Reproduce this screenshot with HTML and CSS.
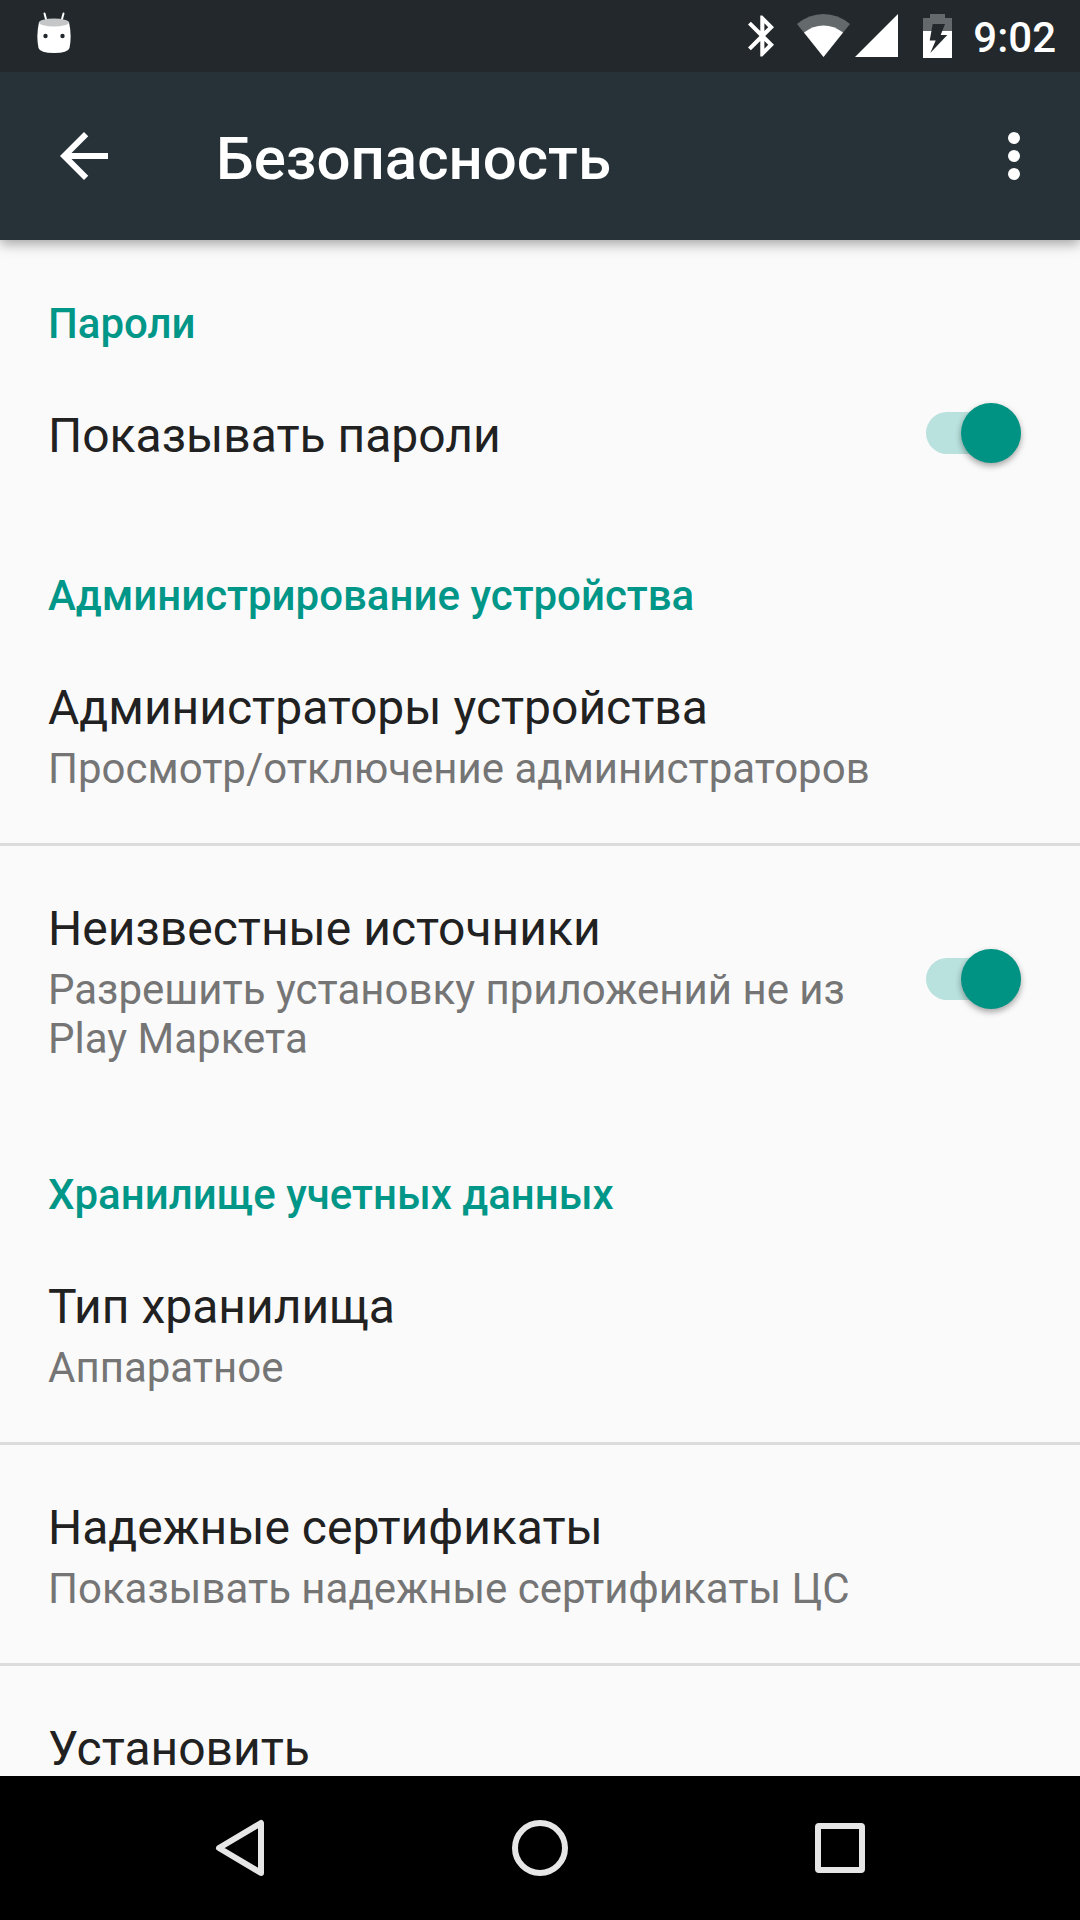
FILE: index.html
```html
<!DOCTYPE html>
<html lang="ru">
<head>
  <meta charset="UTF-8">
  <meta name="viewport" content="width=device-width, initial-scale=1">
  <title>Безопасность</title>
  <link rel="stylesheet" href="styles.css">
</head>
<body>

<div class="status-bar">
  <svg class="icon-notification" width="36" height="42" viewBox="0 0 36 42">
    <path d="M8.500 1.500L10.500 9M27.500 1.500L25.500 9" stroke="#fff" stroke-width="2" stroke-linecap="round"/>
    <path d="M3 10Q18 5 33 10Q36 24 33.500 36Q32 41 18 41Q4 41 2.500 36Q0 24 3 10z" fill="#fff"/>
    <ellipse cx="18" cy="10.500" rx="15" ry="4" fill="#c4c6c7"/>
    <circle cx="9.500" cy="24" r="2.200" fill="#22282b"/>
    <circle cx="26.500" cy="24" r="2.200" fill="#22282b"/>
  </svg>
  <div class="status-icons">
    <svg width="26" height="44" viewBox="5 2 12.700 20">
      <path fill="#fff" d="M17.710 7.710L12 2h-1v7.590L6.410 5 5 6.410 10.590 12 5 17.590 6.410 19 11 14.410V22h1l5.710-5.710-4.300-4.290 4.300-4.290zM13 5.830l1.880 1.880L13 9.590V5.830zm1.880 10.460L13 18.170v-3.760l1.880 1.880z"/>
    </svg>
    <svg class="icon-wifi" width="53" height="44" viewBox="0 0 53 44">
      <path fill="#64696b" d="M0 10Q12 0 26.500 0T53 10L26.500 43z"/>
      <path fill="#fff" d="M7 18.500Q16 11.500 26.500 11.500T46 18.500L26.500 43z"/>
    </svg>
    <svg class="icon-signal" width="43" height="44" viewBox="0 0 43 44">
      <path fill="#fff" d="M43 0v43H0z"/>
    </svg>
    <svg class="icon-battery" width="29" height="44" viewBox="0 0 29 44">
      <path fill="#64696b" d="M7 0h15v4h7v14H0V4h7z"/>
      <path fill="#fff" d="M0 17h29v27H0z"/>
      <path fill="#22282b" d="M9.700 10H22l-4.300 11h6.600l-17 18 5.400-12.500h-6z"/>
    </svg>
    <span class="clock">9:02</span>
  </div>
</div>

<header class="app-bar">
  <button class="icon-button" type="button" aria-label="Назад">
    <svg width="72" height="72" viewBox="0 0 24 24">
      <path fill="#fff" d="M20 11H7.830l5.590-5.590L12 4l-8 8 8 8 1.410-1.410L7.830 13H20v-2z"/>
    </svg>
  </button>
  <h1>Безопасность</h1>
  <button class="icon-button" type="button" aria-label="Ещё">
    <svg width="72" height="72" viewBox="0 0 24 24">
      <g fill="#fff">
        <circle cx="12" cy="6" r="2"/>
        <circle cx="12" cy="12" r="2"/>
        <circle cx="12" cy="18" r="2"/>
      </g>
    </svg>
  </button>
</header>

<main class="settings">
  <h2>Пароли</h2>
  <div class="item">
    <label class="item-text" for="showPasswords">
      <span class="item-title">Показывать пароли</span>
    </label>
    <input class="switch" type="checkbox" id="showPasswords" checked>
  </div>

  <h2>Администрирование устройства</h2>
  <div class="item">
    <div class="item-text">
      <span class="item-title">Администраторы устройства</span>
      <span class="item-summary">Просмотр/отключение администраторов</span>
    </div>
  </div>
  <div class="item">
    <label class="item-text" for="unknownSources">
      <span class="item-title">Неизвестные источники</span>
      <span class="item-summary">Разрешить установку приложений не из Play Маркета</span>
    </label>
    <input class="switch" type="checkbox" id="unknownSources" checked>
  </div>

  <h2>Хранилище учетных данных</h2>
  <div class="item">
    <div class="item-text">
      <span class="item-title">Тип хранилища</span>
      <span class="item-summary">Аппаратное</span>
    </div>
  </div>
  <div class="item">
    <div class="item-text">
      <span class="item-title">Надежные сертификаты</span>
      <span class="item-summary">Показывать надежные сертификаты ЦС</span>
    </div>
  </div>
  <div class="item">
    <div class="item-text">
      <span class="item-title">Установить</span>
    </div>
  </div>
</main>

<nav class="nav-bar">
  <button type="button" aria-label="Назад">
    <svg width="60" height="60" viewBox="0 0 60 60">
      <path d="M51 5v50L9 30z"/>
    </svg>
  </button>
  <button type="button" aria-label="Главный экран">
    <svg width="60" height="60" viewBox="0 0 60 60">
      <circle cx="30" cy="30" r="25"/>
    </svg>
  </button>
  <button type="button" aria-label="Обзор">
    <svg width="60" height="60" viewBox="0 0 60 60">
      <rect x="8" y="8" width="44" height="44" rx="1"/>
    </svg>
  </button>
</nav>

</body>
</html>
```
FILE: styles.css
```css
* {
  box-sizing: border-box;
}
body {
  display: flex;
  flex-direction: column;
  height: 100vh;
  margin: 0;
  font-family: Roboto, sans-serif;
  color: #212121;
  background-color: #fafafa;
}
h1, h2 {
  margin: 0;
  font-weight: 500;
}
button {
  padding: 0;
  border: none;
  background: none;
  cursor: pointer;
}
svg {
  display: block;
  fill: none;
}

/* status bar */
.status-bar {
  display: flex;
  flex: none;
  align-items: center;
  justify-content: space-between;
  position: relative;
  z-index: 2;
  height: 72px;
  padding: 0 24px 0 36px;
  background-color: #22282b;
}
.icon-notification {
  margin-bottom: 6px;
}
.status-icons {
  display: flex;
  align-items: center;
}
.icon-wifi {
  margin-left: 23px;
}
.icon-signal {
  margin-left: 5px;
}
.icon-battery {
  margin-left: 25px;
}
.clock {
  padding-top: 4px;
  margin-left: 21px;
  font-size: 42px;
  font-weight: 500;
  line-height: 48px;
  color: #fff;
}

/* app bar */
.app-bar {
  display: flex;
  flex: none;
  align-items: center;
  position: relative;
  z-index: 1;
  height: 168px;
  padding: 0 30px 0 48px;
  background-color: #263238;
  box-shadow: 0 4px 12px rgba(0,0,0,0.35);
}
.app-bar h1 {
  flex: 1;
  padding-top: 6px;
  margin-left: 96px;
  font-size: 60px;
  line-height: 70px;
  color: #fff;
}

/* settings list */
.settings {
  flex: 1;
  min-height: 0;
  padding-top: 2px;
  overflow: hidden;
}
.settings h2 {
  padding: 57px 48px 5px;
  font-size: 42px;
  line-height: 49px;
  color: #009688;
}
.item {
  display: flex;
  align-items: center;
  padding: 55px 59px 50px 48px;
}
.item + .item {
  border-top: 3px solid #dcdcdc;
}
.item-text {
  display: flex;
  flex: 1;
  flex-direction: column;
  gap: 8px;
}
.item-title {
  font-size: 48px;
  line-height: 56px;
}
.item-summary {
  font-size: 42px;
  line-height: 49px;
  color: #757575;
}

/* switch */
.switch {
  appearance: none;
  position: relative;
  flex: none;
  width: 95px;
  height: 42px;
  margin: 0 0 6px 48px;
  border-radius: 21px;
  background-color: #b9e1dd;
  cursor: pointer;
}
.switch::before {
  content: "";
  position: absolute;
  top: -9px;
  left: 0;
  width: 60px;
  height: 60px;
  border-radius: 50%;
  background-color: #fafafa;
  box-shadow: 0 3px 6px rgba(0,0,0,0.35);
}
.switch:checked::before {
  left: 35px;
  background-color: #009384;
}
.switch:not(:checked) {
  background-color: #bdbdbd;
}

/* navigation bar */
.nav-bar {
  display: flex;
  flex: none;
  align-items: center;
  justify-content: center;
  gap: 180px;
  height: 144px;
  background-color: #000;
}
.nav-bar button {
  display: flex;
  justify-content: center;
  width: 120px;
}
.nav-bar svg {
  stroke: #e6e6e6;
  stroke-width: 6px;
  stroke-linejoin: round;
}
```
